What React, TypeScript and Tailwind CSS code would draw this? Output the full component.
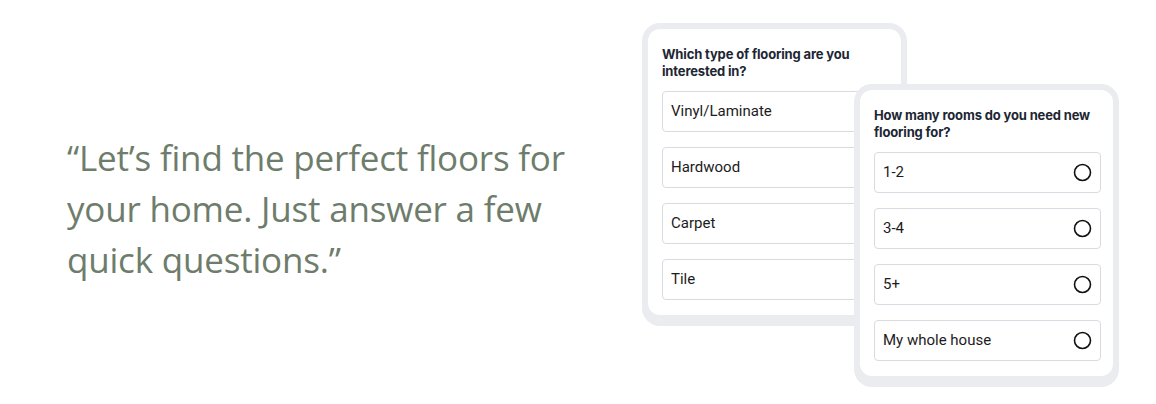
const flooringOptions = ["Vinyl/Laminate", "Hardwood", "Carpet", "Tile"];
const roomOptions = ["1-2", "3-4", "5+", "My whole house"];

function RadioCircle() {
  return (
    <svg width="19" height="19" viewBox="0 0 19 19" className="shrink-0">
      <circle cx="9.5" cy="9.5" r="8" fill="none" stroke="#111" strokeWidth="1.6" />
    </svg>
  );
}

function QuestionCard({
  question,
  options,
  withRadio,
}: {
  question: string;
  options: string[];
  withRadio?: boolean;
}) {
  return (
    <div className="w-[265px] rounded-[18px] border-[6px] border-[#eaecf0] bg-white shadow-[0_5px_0_#eaecf0]">
      <div className="pl-[14px] pr-[12px] pt-[17px] pb-[15px]">
        <p className="text-[13px] leading-[17px] font-bold tracking-[-0.15px] text-[#1d2633] font-['Inter',sans-serif]">
          {question}
        </p>
        <div className="mt-[11px] flex flex-col gap-[15px]">
          {options.map((option) => (
            <div
              key={option}
              className="flex h-[41px] items-center justify-between rounded-[4px] border border-[#d8dce2] bg-white pl-[8px] pr-[8px]"
            >
              <span className="text-[15px] text-[#1c1c1c] font-['Roboto',sans-serif]">{option}</span>
              {withRadio ? <RadioCircle /> : null}
            </div>
          ))}
        </div>
      </div>
    </div>
  );
}

export default function App() {
  return (
    <div className="flex h-[404px] w-[1156px] items-center bg-white">
      <div className="w-[642px] pl-[67px] pt-[12px]">
        <p className="w-[520px] text-[35px] leading-[51px] font-normal tracking-[-0.2px] text-[#6e7d6b] font-['Open_Sans',sans-serif]">
          “Let’s find the perfect floors for your home. Just answer a few quick questions.”
        </p>
      </div>
      <div className="relative h-[359px] w-[476px]">
        <QuestionCard question="Which type of flooring are you interested in?" options={flooringOptions} />
        <div className="absolute left-[212px] top-[61px]">
          <QuestionCard
            question="How many rooms do you need new flooring for?"
            options={roomOptions}
            withRadio
          />
        </div>
      </div>
    </div>
  );
}
